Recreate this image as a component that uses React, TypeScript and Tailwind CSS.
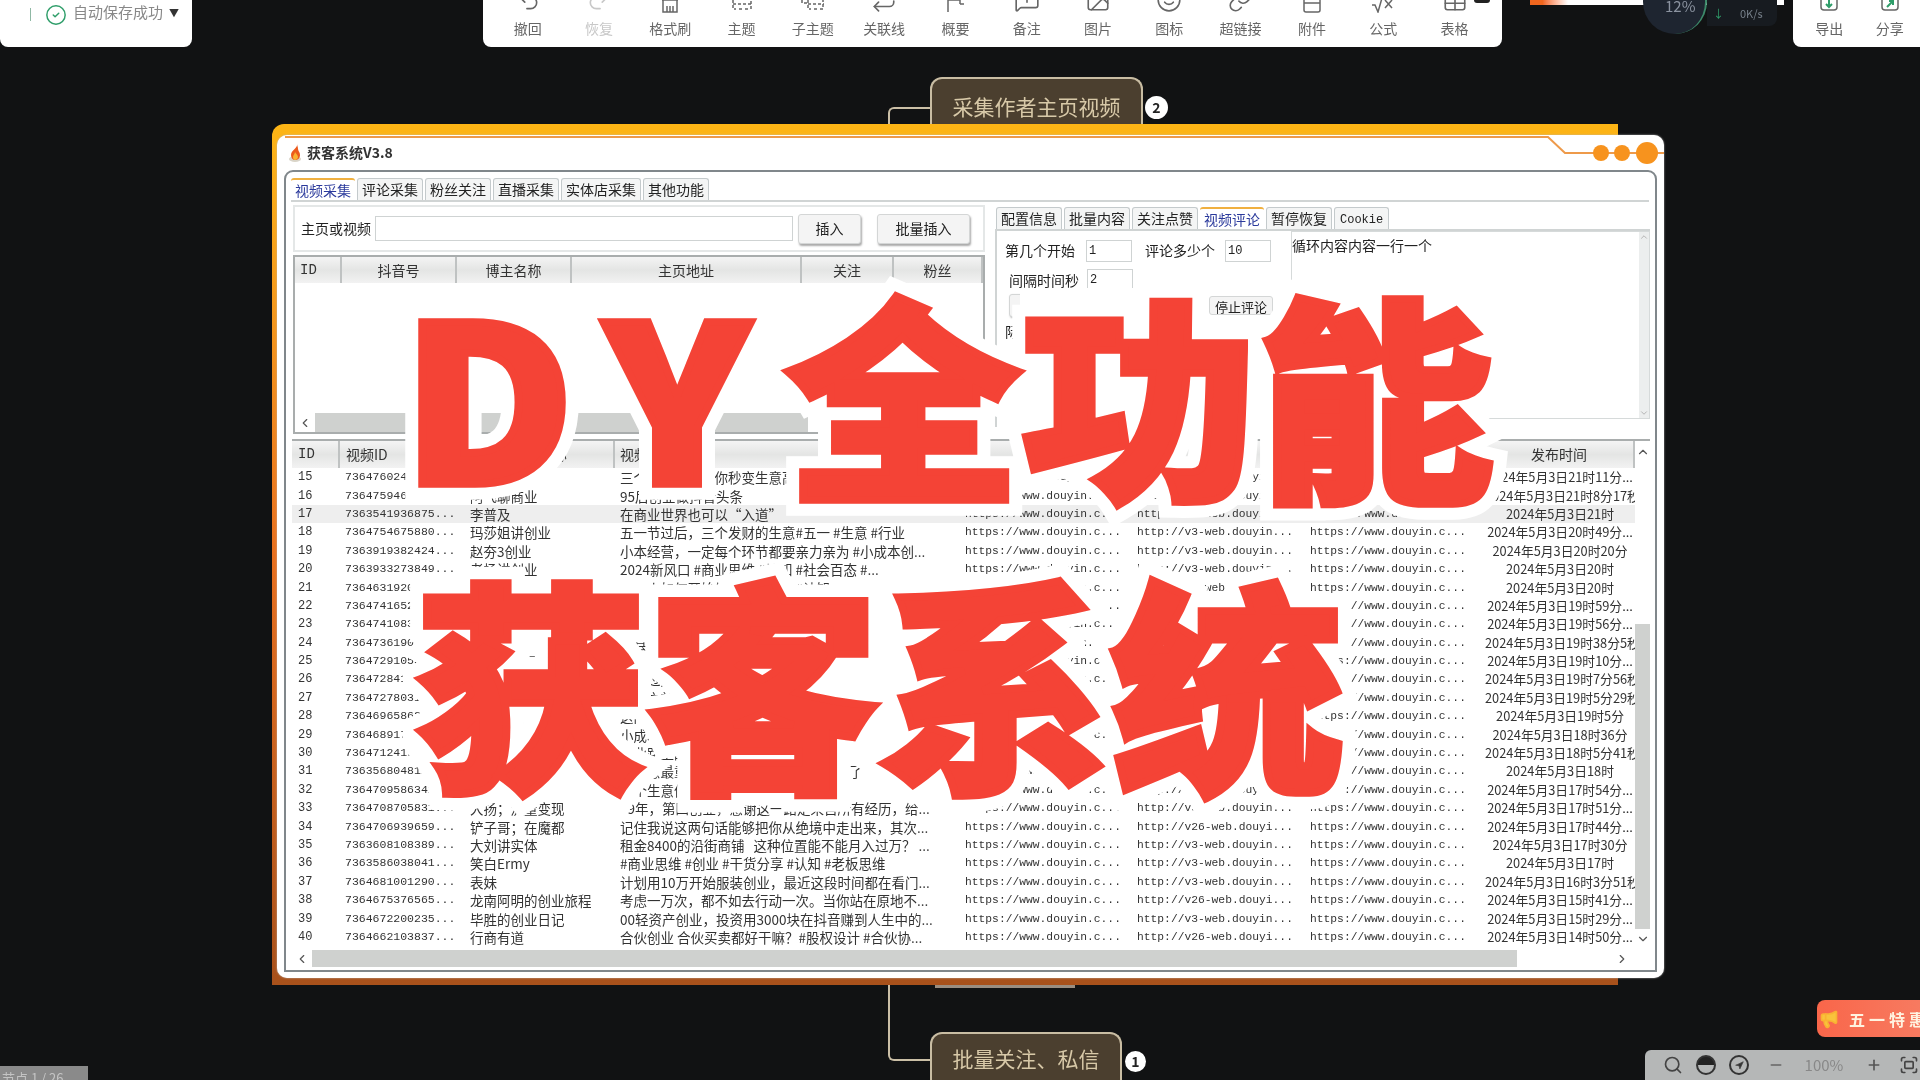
import { CircleCheck, Fullscreen, Image, Link, Megaphone, MessageSquarePlus, Minus, Navigation, Plus, Redo2, Repeat, Search, Smile, Table, Undo2, ChevronLeft, ChevronRight, ChevronUp, ChevronDown } from 'lucide-react';
import type { ReactNode } from 'react';

// toolbar icons are cut by the top edge of the screen, only the lower half shows
function Cropped({ children }: { children: ReactNode }) {
  return (
    <svg width="26" height="26" viewBox="0 -13 26 26" fill="none" stroke="currentColor" strokeWidth="1.5" className="-mt-[13px]">
      {children}
    </svg>
  );
}

const icon = (n: ReactNode) => () => <Cropped>{n}</Cropped>;
const lucide = (L: typeof Undo2) => () => <L size={26} strokeWidth={1.5} className="-mt-[13px]" />;

const tools = [
  { label: '撤回', Icon: lucide(Undo2) },
  { label: '恢复', Icon: lucide(Redo2), off: true },
  { label: '格式刷', Icon: icon(<path d="M5 0h16M6 0v12h14V0M10 6v6M13 6v6M16 6v6" />) },
  { label: '主题', Icon: icon(<path d="M4 0v9h3M10 9h3M16 9h3M22 9V0M4 4h18" strokeDasharray="3 2" />) },
  { label: '子主题', Icon: icon(<path d="M2 0v3h5M8 0v9h3M14 9h3M20 9h3V0M8 4h16" strokeDasharray="3 2" />) },
  { label: '关联线', Icon: lucide(Repeat) },
  { label: '概要', Icon: icon(<path d="M6 0v12M6 0h12v4M18 4h4" />) },
  { label: '备注', Icon: lucide(MessageSquarePlus) },
  { label: '图片', Icon: lucide(Image) },
  { label: '图标', Icon: lucide(Smile) },
  { label: '超链接', Icon: lucide(Link) },
  { label: '附件', Icon: icon(<path d="M5 0v10a2 2 0 0 0 2 2h12a2 2 0 0 0 2-2V0M5 3h16" />) },
  { label: '公式', Icon: icon(<path d="M2 5h3l3 7 4-14M15 0l7 8M22 0l-7 8" />) },
  { label: '表格', Icon: lucide(Table) },
];

const v3 = 'http://v3-web.douyin...';
const v26 = 'http://v26-web.douyi...';

const rows = [
  ['15', '7364760243158...', '创业小白', '三个小技巧，让你秒变生意高手', v3, '21时11分...'],
  ['16', '7364759468214...', '阿飞聊商业', '95后创业做抖音头条', v3, '21时8分17秒'],
  ['17', '7363541936875...', '李普及', '在商业世界也可以“入道”', v3, '21时'],
  ['18', '7364754675880...', '玛莎姐讲创业', '五一节过后，三个发财的生意#五一 #生意 #行业', v3, '20时49分...'],
  ['19', '7363919382424...', '赵夯3创业', '小本经营，一定每个环节都要亲力亲为 #小成本创...', v3, '20时20分'],
  ['20', '7363933273849...', '老杨讲创业', '2024新风口 #商业思维 #认知 #社会百态 #...', v3, '20时'],
  ['21', '7364631920415...', '小刘说生意', '普通人如何开始做生意 #创业 #认知', v3, '20时'],
  ['22', '7364741652238...', '老板思维', '做生意一定要懂得的道理 #商业思维', v3, '19时59分...'],
  ['23', '7364741083376...', '创业老王', '没有经验怎么开店 #实体店 #创业', v3, '19时56分...'],
  ['24', '7364736190247...', '小城故事', '小县城最赚钱的生意 #小成本创业', v3, '19时38分5秒'],
  ['25', '7364729105563...', '阿强创业记', '五一假期的赚钱思路 #创业思维', v3, '19时10分...'],
  ['26', '7364728416392...', '生意经', '月入过万的小生意 #干货分享', v3, '19时7分56秒'],
  ['27', '7364727803115...', '老周聊实体', '开店之前必须想清楚的事 #实体店', v3, '19时5分29秒'],
  ['28', '7364696586204...', '商业观察', '这门生意值得做吗 #商业思维', v3, '19时5分'],
  ['29', '7364689172950...', '大海创业', '小成本创业项目 大家可以看一看', v3, '18时36分'],
  ['30', '7364712419836...', '林哥说事', '创业路上的那些坑 #创业 #认知', v3, '18时5分41秒'],
  ['31', '7363568048127...', '思维课堂', '做生意最重要的是什么，看完你就明白了', v3, '18时'],
  ['32', '7364709586341...', '小白商学院', '这个生意值不值得做，要学会自己判断', v3, '17时54分...'],
  ['33', '7364708705831...', '大扬；流量变现', '09年，第四创业，感谢这一路走来自所有经历，给...', v3, '17时51分...'],
  ['34', '7364706939659...', '铲子哥；在魔都', '记住我说这两句话能够把你从绝境中走出来，其次...', v26, '17时44分...'],
  ['35', '7363608108389...', '大刘讲实体', '租金8400的沿街商铺   这种位置能不能月入过万？ ...', v3, '17时30分'],
  ['36', '7363586038041...', '笑白Ermy', '#商业思维 #创业 #干货分享 #认知 #老板思维', v3, '17时'],
  ['37', '7364681001290...', '表妹', '计划用10万开始服装创业，最近这段时间都在看门...', v3, '16时3分51秒'],
  ['38', '7364675376565...', '龙南阿明的创业旅程', '考虑一万次，都不如去行动一次。当你站在原地不...', v26, '15时41分...'],
  ['39', '7364672200235...', '毕胜的创业日记', '00轻资产创业，投资用3000块在抖音赚到人生中的...', v3, '15时29分...'],
  ['40', '7364662103837...', '行商有道', '合伙创业 合伙买卖都好干嘛？#股权设计 #合伙协...', v26, '14时50分...'],
];

const cjk = "font-['Noto_Sans_CJK_SC','Liberation_Sans',sans-serif]";
const mono = "font-['Liberation_Mono','Noto_Sans_CJK_SC',monospace]";
const headCell = 'flex items-center justify-center border-r-2 border-[#bfc2c2] bg-gradient-to-b from-[#f4f4f4] via-[#e4e5e4] to-[#f2f2f2] text-[14px] text-[#333]';
const rowCols = 'grid grid-cols-[48px_125px_150px_345px_172px_173px_180px_150px]';

function Tab({ label, active, latin }: { label: string; active?: boolean; latin?: boolean }) {
  return (
    <div className={`flex items-center rounded-t-[3px] ${latin ? `${mono} px-[5px] pt-[2px] text-[12px]` : 'px-1 text-[14px]'} ${active ? 'border-t-2 border-[#f0b040] bg-white text-[#2b3a9c]' : 'border border-b-0 border-[#c4cacc] bg-[#f4f5f5] text-[#222]'}`}>
      {label}
    </div>
  );
}

function Flame() {
  return (
    <svg width="16" height="18" viewBox="0 0 16 18">
      <ellipse cx="7" cy="15" rx="6" ry="3" fill="#d9d4c8" />
      <path d="M9 0c1 4-6 6-6 11 0 3 2 5 4 5 3 0 5-2 5-5 0-3-2-4-2-6 0-2-1-4-1-5z" fill="#ec5a1c" />
      <path d="M7 8c0 2-2 3-2 5 0 2 1 3 2 3s3-1 3-3-2-3-3-5z" fill="#f9b233" />
    </svg>
  );
}

function Headline({ text, className }: { text: ReactNode; className: string }) {
  return (
    <div className={`absolute grid origin-top whitespace-nowrap font-black leading-none ${cjk} ${className}`}>
      <div aria-hidden className="col-start-1 row-start-1 text-white [-webkit-text-stroke:34px_white]">{text}</div>
      <div className="col-start-1 row-start-1 text-[#f44336] [-webkit-text-stroke:8px_#f44336]">{text}</div>
    </div>
  );
}

function MapNode({ label, className, badge, badgeClass }: { label: string; className: string; badge: string; badgeClass: string }) {
  return (
    <>
      <div className={`absolute flex justify-center rounded-t-xl border-2 border-b-0 border-[#c9bda3] bg-[#4b3f2f] text-[21px] leading-[30px] text-[#d8c9a8] ${cjk} ${className}`}>
        {label}
      </div>
      <div className={`absolute flex items-center justify-center rounded-full bg-white text-[14px] font-bold text-[#222] ${badgeClass}`}>{badge}</div>
    </>
  );
}

export default function App() {
  return (
    <div className={`relative h-[1080px] w-[1920px] overflow-hidden bg-[#111213] blur-[0.5px] ${cjk}`}>
      {/* top toolbars */}
      <div className="absolute left-0 top-0 flex h-[47px] w-[192px] items-start rounded-b-lg bg-white pl-[30px] pt-[3px] text-[15px] text-[#888]">
        <div className="mt-[5px] h-[13px] w-px bg-[#8fb8a4]" />
        <CircleCheck size={22} strokeWidth={1.6} className="ml-[14px] mt-[1px] text-[#2f9e6a]" />
        <span className="ml-[6px] leading-[18px]">自动保存成功</span>
        <span className="ml-[6px] text-[10px] leading-[20px] text-[#333]">▼</span>
      </div>

      <div className="absolute left-[483px] top-0 flex h-[47px] w-[1019px] overflow-hidden rounded-b-lg bg-white pl-[9px]">
        {tools.map(({ label, Icon, off }) => (
          <div key={label} className={`flex w-[71.3px] flex-col items-center ${off ? 'text-[#c8c8c8]' : 'text-[#666]'}`}>
            <Icon />
            <span className="mt-[5px] text-[14px] leading-[20px]">{label}</span>
          </div>
        ))}
      </div>
      <div className="absolute left-[1474px] top-0 h-[3px] w-[16px] rounded-b bg-[#222]" />

      <div className="absolute left-[1793px] top-0 flex h-[47px] w-[127px] overflow-hidden rounded-bl-lg bg-white pl-[6px]">
        {[
          { label: '导出', arrow: 'M13 -1v8M10 4l3 3 3-3' },
          { label: '分享', arrow: 'M10 7l6-6M12 1h4v4' },
        ].map(({ label, arrow }) => (
          <div key={label} className="flex w-[61px] flex-col items-center text-[#666]">
            <Cropped>
              <path d="M5 -4v11a3 3 0 0 0 3 3h10a3 3 0 0 0 3-3v-11" />
              <path d={arrow} stroke="#2f9e6a" strokeWidth="2" />
            </Cropped>
            <span className="mt-[5px] text-[14px] leading-[20px]">{label}</span>
          </div>
        ))}
      </div>

      {/* recorder widget */}
      <div className="absolute left-[1530px] top-0 h-[5px] w-[254px] bg-gradient-to-r from-[#f0661e] from-5% to-white to-15%" />
      <div className="absolute left-[1643px] top-[-30px] h-[64px] w-[64px] rounded-full border-r-2 border-[#3d8a6a] bg-[#1e2530]" />
      <div className="absolute left-[1665px] top-0 text-[15px] leading-[12px] text-[#8b93a0]">12%</div>
      <div className="absolute left-[1707px] top-0 flex h-[26px] w-[70px] items-center rounded-br-lg bg-[#171b20] pl-[6px] text-[11px] text-[#77808a]">
        <span className="text-[#2f9e6a]">↓</span>
        <span className="ml-[16px]">0K/s</span>
      </div>

      {/* mind map */}
      <div className="absolute left-[888px] top-[107px] h-[30px] w-[44px] rounded-tl-md border-l-2 border-t-2 border-[#cbbfa6]" />
      <MapNode label="采集作者主页视频" className="left-[930px] top-[77px] h-[60px] w-[213px] pt-[12px]" badge="2" badgeClass="left-[1145px] top-[96px] h-[23px] w-[23px]" />
      <div className="absolute left-[888px] top-[980px] h-[81px] w-[44px] rounded-bl-md border-b-2 border-l-2 border-[#cbbfa6]" />
      <div className="absolute left-[935px] top-[980px] h-[8px] w-[140px] bg-[#9a8d80]" />
      <MapNode label="批量关注、私信" className="left-[930px] top-[1032px] h-[48px] w-[192px] pt-[9px]" badge="1" badgeClass="left-[1125px] top-[1051px] h-[21px] w-[21px]" />

      {/* window */}
      <div className="absolute left-[272px] top-[124px] h-[861px] w-[1346px] rounded-tl-xl bg-gradient-to-b from-[#fdb515] via-[#e8701f] to-[#a8511b]" />
      <div className="absolute left-[277px] top-[135px] flex h-[843px] w-[1387px] flex-col rounded-[10px] bg-white px-[7px] pb-[6px] shadow-[0_0_2px_#bbb]">
        <svg className="absolute left-0 top-0 overflow-visible" width="1387" height="30" viewBox="0 0 1387 30">
          <path d="M8 2H1271L1288 18H1387" fill="none" stroke="#ee9a4a" strokeWidth="2" />
          <circle cx="1324" cy="18" r="8" fill="#f7931e" />
          <circle cx="1345" cy="18" r="8" fill="#f7931e" />
          <circle cx="1370" cy="18" r="11" fill="#f7931e" />
        </svg>
        <div className="flex h-[35px] shrink-0 items-center gap-[3px] pl-[4px] text-[14px] font-bold text-[#333]">
          <Flame />
          <span>获客系统V3.8</span>
        </div>

        <div className="flex min-h-0 flex-1 flex-col rounded-t-[9px] border-2 border-[#80878b] pt-[6px]">
          {/* top tabs */}
          <div className="ml-[5px] mr-[6px] flex h-[24px] shrink-0 gap-[2px] border-b-2 border-[#d0d4d4]">
            {['视频采集', '评论采集', '粉丝关注', '直播采集', '实体店采集', '其他功能'].map((t, i) => (
              <Tab key={t} label={t} active={i === 0} />
            ))}
          </div>

          <div className="ml-[7px] flex h-[232px] shrink-0 gap-[10px]">
            {/* left pane */}
            <div className="flex w-[692px] flex-col pt-[3px]">
              <div className="flex h-[47px] shrink-0 items-center border-2 border-[#e4e7e7] pl-[6px] text-[14px] text-[#222]">
                <span>主页或视频</span>
                <div className="ml-[4px] h-[25px] w-[418px] border border-[#cfd3d3] bg-white" />
                <button className="ml-[5px] h-[30px] w-[63px] rounded-[3px] border border-[#d4d6d6] bg-[#f4f4f4] shadow-[1px_2px_2px_#aaa]">插入</button>
                <button className="ml-[16px] h-[30px] w-[93px] rounded-[3px] border border-[#d4d6d6] bg-[#f4f4f4] shadow-[1px_2px_2px_#aaa]">批量插入</button>
              </div>
              <div className="mt-[3px] flex h-[179px] shrink-0 flex-col border-2 border-[#a9adad]">
                <div className="grid h-[26px] shrink-0 grid-cols-[47px_115px_115px_230px_92px_1fr]">
                  <div className={`${headCell} justify-start pl-[5px] ${mono} text-[12px]`}>ID</div>
                  {['抖音号', '博主名称', '主页地址', '关注', '粉丝'].map(h => (
                    <div key={h} className={headCell}>{h}</div>
                  ))}
                </div>
                <div className="flex-1" />
                <div className="flex h-[19px] shrink-0 bg-white">
                  <div className="flex w-[20px] items-center justify-center text-[#555]"><ChevronLeft size={14} /></div>
                  <div className="h-full w-[493px] bg-[#cfd1cf]" />
                </div>
              </div>
            </div>

            {/* right pane */}
            <div className="flex w-[655px] flex-col pt-[5px]">
              <div className="flex h-[22px] shrink-0 gap-[2px] pl-[1px]">
                {['配置信息', '批量内容', '关注点赞', '视频评论', '暂停恢复'].map((t, i) => (
                  <Tab key={t} label={t} active={i === 3} />
                ))}
                <Tab label="Cookie" latin />
              </div>
              <div className="flex h-[198px] shrink-0 border-l-2 border-t-2 border-[#d0d4d4] pl-[8px] text-[14px] text-[#222]">
                <div className="flex w-[286px] shrink-0 flex-col pt-[8px]">
                  <div className="flex h-[23px] items-center">
                    <span className="w-[81px]">第几个开始</span>
                    <div className={`h-[22px] w-[46px] border border-[#cfd3d3] pl-[2px] text-[12px] leading-[20px] ${mono}`}>1</div>
                    <span className="ml-[13px] w-[80px]">评论多少个</span>
                    <div className={`h-[22px] w-[46px] border border-[#cfd3d3] pl-[2px] text-[12px] leading-[20px] ${mono}`}>10</div>
                  </div>
                  <div className="mt-[7px] flex h-[22px] items-center pl-[4px]">
                    <span className="w-[78px]">间隔时间秒</span>
                    <div className={`h-[22px] w-[46px] border border-[#cfd3d3] pl-[2px] text-[12px] leading-[20px] ${mono}`}>2</div>
                  </div>
                  <div className="mt-[3px] flex h-[23px] items-center gap-[100px] pl-[4px]">
                    <button className="h-[23px] w-[100px] rounded-[3px] border border-[#d4d6d6] bg-[#f4f4f4] shadow-[1px_1px_2px_#aaa]">间隔评论</button>
                    <button className="h-[19px] w-[64px] rounded-[3px] border border-[#d4d6d6] bg-[#f4f4f4] text-[13px]">停止评论</button>
                  </div>
                  <span className="mt-[4px]">际</span>
                </div>
                <div className="flex h-[188px] flex-1 justify-between border border-[#d6dada] pt-[6px] leading-[14px]">
                  <span>循环内容内容一行一个</span>
                  <div className="-mt-[6px] flex w-[10px] flex-col items-center justify-between bg-[#eceeee] text-[#aaa]">
                    <ChevronUp size={10} />
                    <ChevronDown size={10} />
                  </div>
                </div>
              </div>
            </div>
          </div>

          {/* result table */}
          <div className="ml-[6px] mt-[5px] flex h-[528px] w-[1358px] shrink-0 flex-col border-t-2 border-[#a9adad]">
            <div className="flex h-[509px] shrink-0">
              <div className="w-[1343px] shrink-0">
                <div className={`${rowCols} h-[27px]`}>
                  <div className={`${headCell} justify-start pl-[6px] ${mono} text-[12px]`}>ID</div>
                  <div className={`${headCell} justify-start pl-[6px]`}>视频ID</div>
                  <div className={headCell}>博主名称</div>
                  <div className={`${headCell} justify-start pl-[5px]`}>视频标题</div>
                  <div className={headCell}>地址</div>
                  <div className={headCell}>视频地址</div>
                  <div className={headCell}>作者主页</div>
                  <div className={headCell}>发布时间</div>
                </div>
                {rows.map(r => (
                  <div key={r[0]} className={`${rowCols} h-[18.4px] items-center text-[13.5px] leading-[18px] text-[#333] ${r[0] === '17' ? 'bg-[#eeeeee]' : ''}`}>
                    <span className={`pl-[6px] ${mono} text-[12px]`}>{r[0]}</span>
                    <span className={`pl-[5px] ${mono} text-[11.5px]`}>{r[1]}</span>
                    <span className="whitespace-nowrap pl-[5px]">{r[2]}</span>
                    <span className="overflow-hidden whitespace-pre pl-[5px]">{r[3]}</span>
                    <span className={`pl-[5px] ${mono} text-[11.3px]`}>https://www.douyin.c...</span>
                    <span className={`pl-[5px] ${mono} text-[11.3px]`}>{r[4]}</span>
                    <span className={`pl-[5px] ${mono} text-[11.3px]`}>https://www.douyin.c...</span>
                    <span className="flex justify-center-safe overflow-hidden whitespace-nowrap text-[12.8px]">2024年5月3日{r[5]}</span>
                  </div>
                ))}
              </div>
              <div className="flex w-[15px] shrink-0 flex-col items-center bg-white text-[#555]">
                <ChevronUp size={14} className="mt-[4px]" />
                <div className="mt-[165px] h-[305px] w-full bg-[#cfd1cf]" />
                <ChevronDown size={14} className="mt-[3px]" />
              </div>
            </div>
            <div className="flex h-[17px] shrink-0 items-center text-[#555]">
              <ChevronLeft size={14} className="ml-[3px] mr-[3px]" />
              <div className="h-full w-[1205px] bg-[#cfd1cf]" />
              <ChevronRight size={14} className="ml-[98px]" />
            </div>
          </div>
        </div>
      </div>

      {/* big title, with the blocky white patch its halo leaves over the form */}
      <div className="absolute left-[1020px] top-[288px] h-[36px] w-[185px] bg-white" />
      <Headline className="left-[402px] top-[281px] scale-y-[.92] text-[236px]" text={<><span className="tracking-[0.155em]">DY</span>全功能</>} />
      <Headline className="left-[415px] top-[566px] scale-y-[.96] text-[232px]" text="获客系统" />

      {/* bottom corners */}
      <div className="absolute bottom-0 left-0 h-[14px] w-[88px] overflow-hidden bg-[#8a8a8a] pl-[2px] pt-[5px] text-[13px] leading-[14px] text-[#c4c4c4]">节点 1 / 26</div>
      <div className="absolute left-[1817px] top-[1000px] flex h-[37px] w-[103px] items-center overflow-hidden rounded-l-lg bg-gradient-to-r from-[#f9664a] to-[#f77a60] pl-[2px] text-[16px] font-bold tracking-[4px] text-[#fff3e0]">
        <Megaphone size={20} fill="#f9c33c" className="shrink-0 text-[#f9b233]" />
        <span className="ml-[10px] whitespace-nowrap">五一特惠</span>
      </div>
      <div className="absolute left-[1645px] top-[1050px] flex h-[30px] w-[275px] items-center rounded-tl-md bg-[#b5b7b7] pl-[18px] text-[#444]">
        <Search size={20} strokeWidth={2} />
        <div className="ml-[13px] h-[20px] w-[20px] overflow-hidden rounded-full border-2 border-[#333] bg-gradient-to-b from-[#222] from-50% to-transparent to-50%" />
        <div className="ml-[13px] flex h-[20px] w-[20px] items-center justify-center rounded-full border-2 border-[#333]">
          <Navigation size={9} fill="#333" />
        </div>
        <Minus size={16} strokeWidth={2.5} className="ml-[19px] text-[#666]" />
        <span className="ml-[15px] w-[50px] text-center text-[15px] text-[#888]">100%</span>
        <Plus size={16} strokeWidth={2.5} className="ml-[17px] text-[#555]" />
        <Fullscreen size={20} strokeWidth={2} className="ml-[17px]" />
      </div>
    </div>
  );
}
